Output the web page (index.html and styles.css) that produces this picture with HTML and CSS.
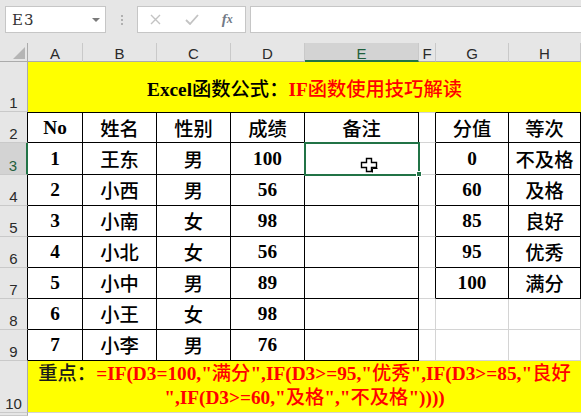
FILE: index.html
```html
<!DOCTYPE html>
<html>
<head>
<meta charset="utf-8">
<link rel="stylesheet" href="styles.css">
</head>
<body>
<div class="app">
  <div class="fbar">
    <div class="namebox"><span class="nbtext">E3</span><span class="caret"></span></div>
    <div class="dots"><i></i><i></i><i></i></div>
    <div class="btns">
      <span class="ib"><svg width="11" height="11" viewBox="0 0 11 11"><path d="M1 1L10 10M10 1L1 10" stroke="#c3c3c3" stroke-width="1.4" fill="none"/></svg></span>
      <span class="ib"><svg width="14" height="11" viewBox="0 0 14 11"><path d="M1 6L5 10L13 1" stroke="#c3c3c3" stroke-width="1.8" fill="none"/></svg></span>
      <span class="ib fx">f<span class="fxx">x</span></span>
    </div>
    <div class="finput"></div>
  </div>
  <div class="sheet">
    <div class="corner"><span class="tri"></span></div>
    <div class="ch">A</div><div class="ch">B</div><div class="ch">C</div><div class="ch">D</div><div class="ch on">E</div><div class="ch">F</div><div class="ch">G</div><div class="ch">H</div>

    <div class="rh">1</div>
    <div class="c title"><div class="tx">Excel<span class="zh">函数公式：</span><span class="red">IF<span class="zh">函数使用技巧解读</span></span></div></div>

    <div class="rh k">2</div>
    <div class="c k r2">No</div><div class="c k r2 zh">姓名</div><div class="c k r2 zh">性别</div><div class="c k r2 zh">成绩</div><div class="c k r2 zh">备注</div><div class="c fk r2g"></div><div class="c k r2 zh">分值</div><div class="c k r2 zh">等次</div>

    <div class="rh on">3</div>
    <div class="c k">1</div><div class="c k zh">王东</div><div class="c k zh">男</div><div class="c k">100</div><div class="c k"></div><div class="c fk"></div><div class="c k">0</div><div class="c k zh">不及格</div>

    <div class="rh k">4</div>
    <div class="c k">2</div><div class="c k zh">小西</div><div class="c k zh">男</div><div class="c k">56</div><div class="c k"></div><div class="c fk"></div><div class="c k">60</div><div class="c k zh">及格</div>

    <div class="rh k">5</div>
    <div class="c k">3</div><div class="c k zh">小南</div><div class="c k zh">女</div><div class="c k">98</div><div class="c k"></div><div class="c fk"></div><div class="c k">85</div><div class="c k zh">良好</div>

    <div class="rh k">6</div>
    <div class="c k">4</div><div class="c k zh">小北</div><div class="c k zh">女</div><div class="c k">56</div><div class="c k"></div><div class="c fk"></div><div class="c k">95</div><div class="c k zh">优秀</div>

    <div class="rh k">7</div>
    <div class="c k">5</div><div class="c k zh">小中</div><div class="c k zh">男</div><div class="c k">89</div><div class="c k"></div><div class="c fk"></div><div class="c k">100</div><div class="c k zh">满分</div>

    <div class="rh k">8</div>
    <div class="c k">6</div><div class="c k zh">小王</div><div class="c k zh">女</div><div class="c k">98</div><div class="c k"></div><div class="c"></div><div class="c"></div><div class="c"></div>

    <div class="rh k">9</div>
    <div class="c k">7</div><div class="c k zh">小李</div><div class="c k zh">男</div><div class="c k">76</div><div class="c k"></div><div class="c"></div><div class="c"></div><div class="c"></div>

    <div class="rh">10</div>
    <div class="c note"><div class="tx"><span class="dark zh">重点：</span><span class="red">=IF(D3=100,"<span class="zh">满分</span>",IF(D3&gt;=95,"<span class="zh">优秀</span>",IF(D3&gt;=85,"<span class="zh">良好</span><br>",IF(D3&gt;=60,"<span class="zh">及格</span>","<span class="zh">不及格</span>"))))</span></div></div>

    <div class="rh"></div>
    <div class="c tail"></div>

    <div class="selbox"></div>
    <div class="handle"></div>
    <svg class="cursor" width="18" height="17" viewBox="0 0 18 17"><path d="M6.5 1.5H11.5V5.5H16.5V10.5H11.5V14.5H6.5V10.5H1.5V5.5H6.5Z" fill="#fff" stroke="#000" stroke-width="1.4"/><path d="M12.5 15.5V11.5H17.5" stroke="#000" stroke-width="1" fill="none"/></svg>
  </div>
</div>
</body>
</html>
```

FILE: styles.css
```css
* { box-sizing: border-box; }
html, body { margin: 0; padding: 0; }
body { width: 581px; height: 416px; overflow: hidden; background: #fff; }
.app { width: 581px; }

.fbar {
  height: 43px;
  background: #e6e6e6;
  display: flex;
  align-items: flex-start;
  padding: 6px 0 0 5px;
}
.namebox {
  width: 101px; height: 27px;
  background: #fff;
  border: 1px solid #c6c6c6;
  display: flex; align-items: center;
  padding-left: 6px;
}
.nbtext { font: 15px "DejaVu Serif", "Liberation Serif", serif; color: #333; letter-spacing: 1px; }
.caret {
  margin-left: auto; margin-right: 5px;
  width: 0; height: 0;
  border-left: 4px solid transparent;
  border-right: 4px solid transparent;
  border-top: 4px solid #7a7a7a;
}
.dots {
  width: 31px; height: 27px;
  display: flex; flex-direction: column; align-items: center; justify-content: center; gap: 2px;
}
.dots i { display: block; width: 2px; height: 2px; background: #b0b0b0; }
.btns {
  width: 109px; height: 27px;
  background: #fff;
  border: 1px solid #c6c6c6;
  display: flex; align-items: center;
}
.ib { width: 36px; display: flex; justify-content: center; align-items: center; }
.fx { font: italic 700 15px "Liberation Serif", serif; color: #727a86; }
.fxx { font-size: 12px; }
.finput {
  flex: 1; height: 27px; margin-left: 4px;
  background: #fff;
  border: 1px solid #c6c6c6; border-right: none;
}

.sheet {
  position: relative;
  display: grid;
  grid-template-columns: 28px 55px 74px 74px 74px 114px 17px 73px 72px;
  grid-template-rows: 19px 50px 31px 32px 31px 31px 31px 31px 31px 31px 52px 3px;
}
.corner {
  background: #e6e6e6;
  border-right: 1px solid #ababab;
  border-bottom: 1px solid #ababab;
  display: flex; justify-content: flex-end; align-items: flex-end;
  padding: 0 2px 2px 0;
}
.tri {
  width: 0; height: 0;
  border-left: 12px solid transparent;
  border-bottom: 12px solid #b5b5b5;
}
.ch {
  background: #e6e6e6;
  border-right: 1px solid #c9c9c9;
  border-bottom: 1px solid #ababab;
  display: flex; justify-content: center; align-items: center;
  padding-top: 3px;
  font: 15px "Liberation Sans", Arial, sans-serif;
  color: #2a2a2a;
}
.ch.on {
  background: #d3d3d3;
  border-bottom: 2px solid #217346;
  color: #1f5f3c;
}
.rh {
  background: #e6e6e6;
  border-right: 1px solid #ababab;
  border-bottom: 1px solid #c9c9c9;
  display: flex; justify-content: center; align-items: flex-end;
  padding-bottom: 0;
  font: 15px "Liberation Sans", Arial, sans-serif;
  color: #2a2a2a;
}
.rh.k { border-right-color: #000; }
.rh.on {
  background: #d3d3d3;
  border-right: 2px solid #217346;
  color: #1f5f3c;
}

.c {
  background: #fff;
  border-right: 1px solid #d4d4d4;
  border-bottom: 1px solid #d4d4d4;
  display: flex; justify-content: center; align-items: center;
  font: 700 19.3px "Liberation Serif", "Noto Sans CJK SC", serif;
  color: #000;
  white-space: nowrap;
}
.c.k { border-right-color: #000; border-bottom-color: #000; }
.c.fk { border-right-color: #000; }
.r2 { border-top: 1px solid #000; }
.r2g { border-top: 1px solid #d4d4d4; }
.zh { font-weight: 500; }
.red { color: #ff0000; }
.dark { color: #1a1a1a; }
.tx { text-align: center; }

.title {
  grid-column: 2 / span 8;
  background: #ffff00;
  border-bottom: none;
  border-right: none;
  padding-top: 1px;
}
.note {
  grid-column: 2 / span 8;
  background: #ffff00;
  border-right: none;
  line-height: 24px;
  padding-bottom: 2px;
}
.tail { grid-column: 2 / span 8; border: none; }

.selbox {
  position: absolute;
  left: 304px; top: 99px;
  width: 116px; height: 34px;
  border: 2px solid #217346;
}
.handle {
  position: absolute;
  left: 416px; top: 128px;
  width: 6px; height: 6px;
  background: #217346;
  border: 1px solid #fff;
}
.cursor {
  position: absolute;
  left: 360px; top: 114px;
}
```
